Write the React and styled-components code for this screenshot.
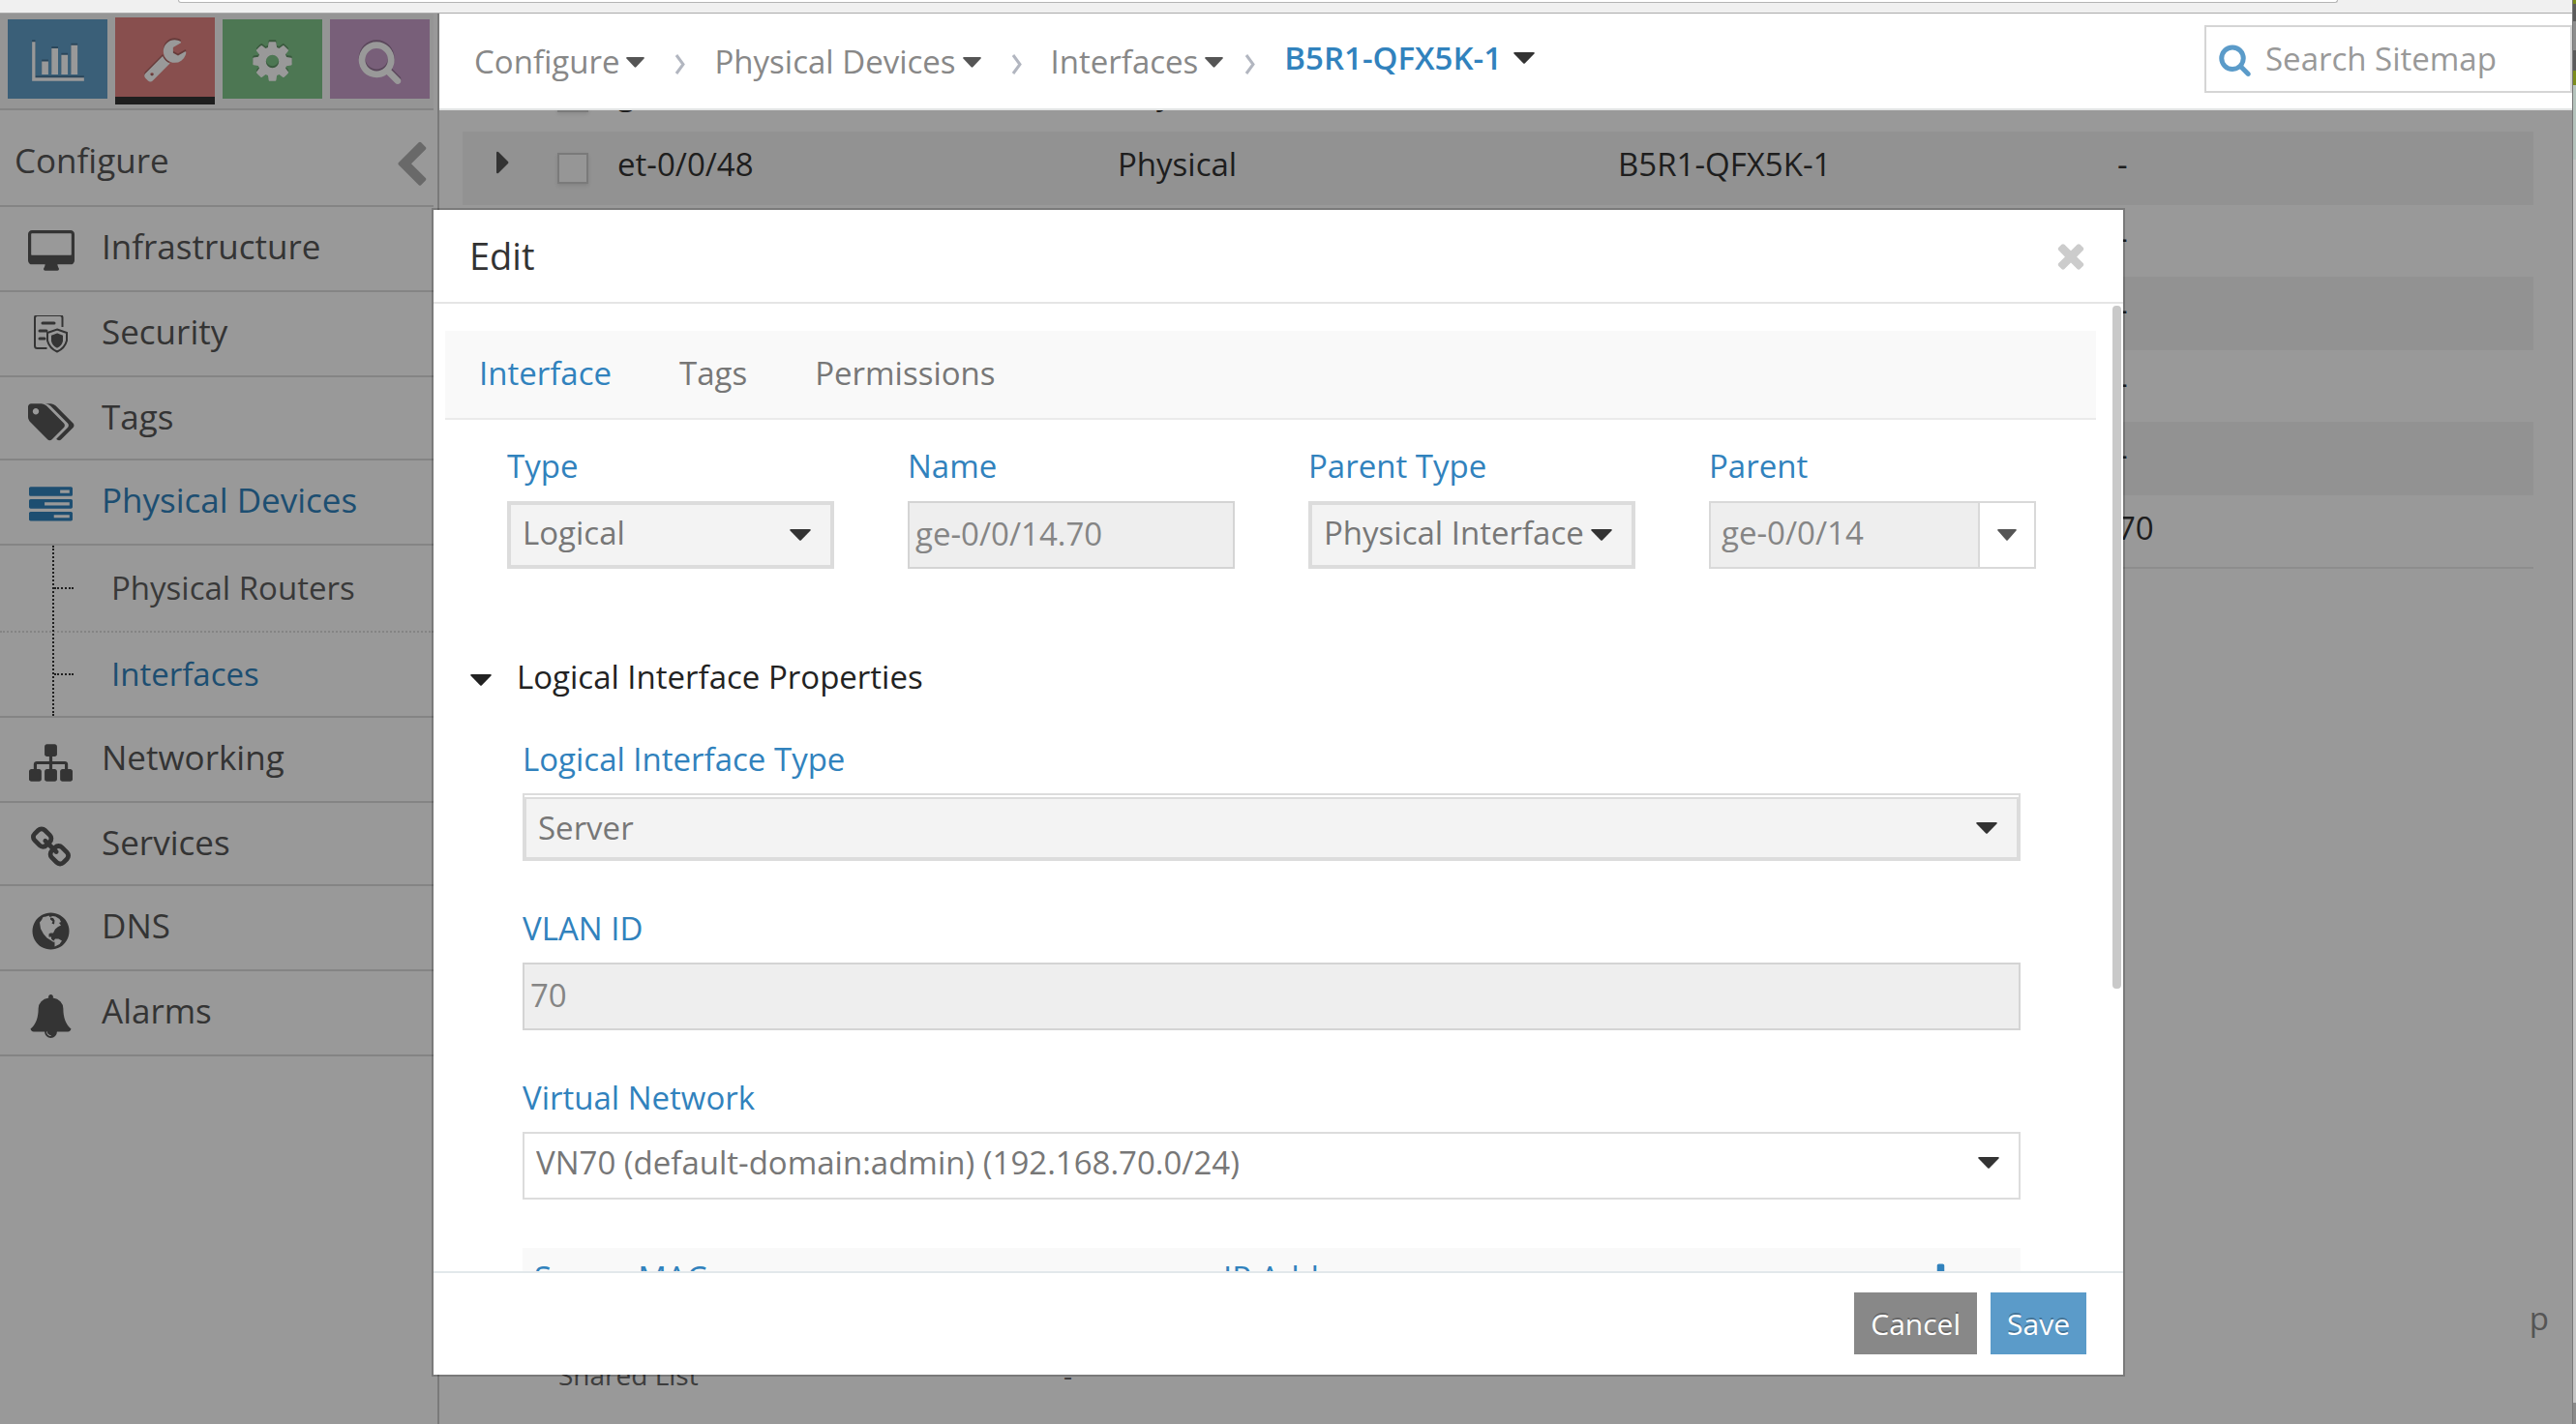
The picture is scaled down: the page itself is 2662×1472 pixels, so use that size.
import React from "react";
import styled, { createGlobalStyle, css } from "styled-components";

const Global = createGlobalStyle`
  *, *::before, *::after { box-sizing: border-box; }
  body { margin: 0; overflow: hidden; }
  body, button, input, select, table {
    font-family: "Open Sans", "Noto Sans", "Liberation Sans", sans-serif;
    font-size: 33px;
    line-height: 44px;
  }
  button, input, select { margin: 0; border-radius: 0; }
  a { color: inherit; text-decoration: none; }
  ul, ol, dl, dd { margin: 0; padding: 0; list-style: none; }
  h1, h2 { margin: 0; font-weight: 400; }
  svg { display: block; flex: none; }
`;

const blue = "#3182bd";

/* ---------- icons ---------- */

const paths = {
  chart: "M640 896v512h-256v-512h256zm384-512v1024h-256v-1024h256zm1024 1152v128h-2048v-1536h128v1408h1920zm-640-896v768h-256v-768h256zm384-384v1152h-256v-1152h256z",
  wrench: "M448 1472q0-26-19-45t-45-19-45 19-19 45 19 45 45 19 45-19 19-45zm644-420l-682 682q-37 37-90 37-52 0-91-37l-106-108q-38-36-38-90 0-53 38-91l681-681q39 98 114.5 173.5t173.5 114.5zm634-435q0 39-23 106-47 134-164.5 217.5t-258.5 83.5q-185 0-316.5-131.5t-131.5-316.5 131.5-316.5 316.5-131.5q58 0 121.5 16.5t107.5 46.5q16 11 16 28t-16 28l-293 169v224l193 107q5-3 79-48.5t135.5-81 70.5-35.5q15 0 23.5 10t8.5 25z",
  cog: "M1152 896q0-106-75-181t-181-75-181 75-75 181 75 181 181 75 181-75 75-181zm512-109v222q0 12-8 23t-20 13l-185 28q-19 54-39 91 35 50 107 138 10 12 10 25t-9 23q-27 37-99 108t-94 71q-12 0-26-9l-138-108q-44 23-91 38-16 136-29 186-7 28-36 28h-222q-14 0-24.5-8.5t-11.5-21.5l-28-184q-49-16-90-37l-141 107q-10 9-25 9-14 0-25-11-126-114-165-168-7-10-7-23 0-12 8-23 15-21 51-66.5t54-70.5q-27-50-41-99l-183-27q-13-2-21-12.5t-8-23.5v-222q0-12 8-23t19-13l186-28q14-46 39-92-40-57-107-138-10-12-10-24 0-10 9-23 26-36 98.5-107.5t94.5-71.5q13 0 26 10l138 107q44-23 91-38 16-136 29-186 7-28 36-28h222q14 0 24.5 8.5t11.5 21.5l28 184q49 16 90 37l142-107q9-9 24-9 13 0 25 10 129 119 165 170 7 8 7 22 0 12-8 23-15 21-51 66.5t-54 70.5q26 50 41 98l183 28q13 2 21 12.5t8 23.5z",
  search: "M1216 832q0-185-131.5-316.5t-316.5-131.5-316.5 131.5-131.5 316.5 131.5 316.5 316.5 131.5 316.5-131.5 131.5-316.5zm512 832q0 52-38 90t-90 38q-54 0-90-38l-343-342q-179 124-399 124-143 0-273.5-55.5t-225-150-150-225-55.5-273.5 55.5-273.5 150-225 225-150 273.5-55.5 273.5 55.5 225 150 150 225 55.5 273.5q0 220-124 399l343 343q37 37 37 90z",
  desktop: "M1792 992v-832q0-13-9.5-22.5t-22.5-9.5h-1600q-13 0-22.5 9.5t-9.5 22.5v832q0 13 9.5 22.5t22.5 9.5h1600q13 0 22.5-9.5t9.5-22.5zm128-832v1088q0 66-47 113t-113 47h-544q0 37 16 77.5t32 71 16 43.5q0 26-19 45t-45 19h-512q-26 0-45-19t-19-45q0-14 16-44t32-70 16-78h-544q-66 0-113-47t-47-113v-1088q0-66 47-113t113-47h1600q66 0 113 47t47 113z",
  tags: "M448 448q0-53-37.5-90.5t-90.5-37.5-90.5 37.5-37.5 90.5 37.5 90.5 90.5 37.5 90.5-37.5 37.5-90.5zm1067 576q0 53-37 90l-491 492q-39 37-91 37-53 0-90-37l-715-716q-38-37-64.5-101t-26.5-117v-416q0-52 38-90t90-38h416q53 0 117 26.5t102 64.5l715 714q37 39 37 91zm384 0q0 53-37 90l-491 492q-39 37-91 37-36 0-59-14t-53-45l470-470q37-37 37-90 0-52-37-91l-715-714q-38-38-102-64.5t-117-26.5h224q53 0 117 26.5t102 64.5l715 714q37 39 37 91z",
  tasks: "M1024 1408h640v-128h-640v128zm-384-512h1024v-128h-1024v128zm640-512h384v-128h-384v128zm512 832v256q0 26-19 45t-45 19h-1664q-26 0-45-19t-19-45v-256q0-26 19-45t45-19h1664q26 0 45 19t19 45zm0-512v256q0 26-19 45t-45 19h-1664q-26 0-45-19t-19-45v-256q0-26 19-45t45-19h1664q26 0 45 19t19 45zm0-512v256q0 26-19 45t-45 19h-1664q-26 0-45-19t-19-45v-256q0-26 19-45t45-19h1664q26 0 45 19t19 45z",
  sitemap: "M1792 1248v320q0 40-28 68t-68 28h-320q-40 0-68-28t-28-68v-320q0-40 28-68t68-28h96v-192h-512v192h96q40 0 68 28t28 68v320q0 40-28 68t-68 28h-320q-40 0-68-28t-28-68v-320q0-40 28-68t68-28h96v-192h-512v192h96q40 0 68 28t28 68v320q0 40-28 68t-68 28h-320q-40 0-68-28t-28-68v-320q0-40 28-68t68-28h96v-192q0-52 38-90t90-38h512v-192h-96q-40 0-68-28t-28-68v-320q0-40 28-68t68-28h320q40 0 68 28t28 68v320q0 40-28 68t-68 28h-96v192h512q52 0 90 38t38 90v192h96q40 0 68 28t28 68z",
  link: "M1520 1216q0-40-28-68l-208-208q-28-28-68-28-42 0-72 32 3 3 19 18.5t21.5 21.5 15 19 13 25.5 3.5 27.5q0 40-28 68t-68 28q-15 0-27.5-3.5t-25.5-13-19-15-21.5-21.5-18.5-19q-33 31-33 73 0 40 28 68l206 207q27 27 68 27 40 0 68-26l147-146q28-28 28-67zm-703-705q0-40-28-68l-206-207q-28-28-68-28-39 0-68 27l-147 146q-28 28-28 67 0 40 28 68l208 208q27 27 68 27 42 0 72-31-3-3-19-18.5t-21.5-21.5-15-19-13-25.5-3.5-27.5q0-40 28-68t68-28q15 0 27.5 3.5t25.5 13 19 15 21.5 21.5 18.5 19q33-31 33-73zm895 705q0 120-85 203l-147 146q-83 83-203 83-121 0-204-85l-206-207q-83-83-83-203 0-123 88-209l-88-88q-86 88-208 88-120 0-204-84l-208-208q-84-84-84-204t85-203l147-146q83-83 203-83 121 0 204 85l206 207q83 83 83 203 0 123-88 209l88 88q86-88 208-88 120 0 204 84l208 208q84 84 84 204z",
  bell: "M912 1696q0-16-16-16-59 0-101.5-42.5t-42.5-101.5q0-16-16-16t-16 16q0 73 51.5 124.5t124.5 51.5q16 0 16-16zm816-288q0 52-38 90t-90 38h-448q0 106-75 181t-181 75-181-75-75-181h-448q-52 0-90-38t-38-90q50-42 91-88t85-119.5 74.5-158.5 50-206 19.5-260q0-152 117-282.5t307-158.5q-8-19-8-39 0-40 28-68t68-28 68 28 28 68q0 20-8 39 190 28 307 158.5t117 282.5q0 139 19.5 260t50 206 74.5 158.5 85 119.5 91 88z",
  back: "M1427 301l-531 531 531 531q19 19 19 45t-19 45l-166 166q-19 19-45 19t-45-19l-742-742q-19-19-19-45t19-45l742-742q19-19 45-19t45 19l166 166q19 19 19 45t-19 45z",
  times: "M1490 1322q0 40-28 68l-136 136q-28 28-68 28t-68-28l-294-294-294 294q-28 28-68 28t-68-28l-136-136q-28-28-28-68t28-68l294-294-294-294q-28-28-28-68t28-68l136-136q28-28 68-28t68 28l294 294 294-294q28-28 68-28t68 28l136 136q28 28 28 68t-28 68l-294 294 294 294q28 28 28 68z",
  plus: "M1600 736v192q0 40-28 68t-68 28h-416v416q0 40-28 68t-68 28h-192q-40 0-68-28t-28-68v-416h-416q-40 0-68-28t-28-68v-192q0-40 28-68t68-28h416v-416q0-40 28-68t68-28h192q40 0 68 28t28 68v416h416q40 0 68 28t28 68z",
};

const Icon = ({ name, size = 45, units = 1792 }) => (
  <svg height={size} width={Math.round((size * units) / 1792)} viewBox={`0 0 ${units} 1792`} fill="currentColor" aria-hidden="true">
    <path fillRule="evenodd" d={paths[name]} />
  </svg>
);

const GlobeIcon = () => (
  <svg width="45" height="45" viewBox="0 0 45 45" fill="currentColor" aria-hidden="true">
    <path
      fillRule="evenodd"
      d="M22.500 3.500a19 19 0 1 0 0.010 0zM17.500 7.500l3-1 1 1.500 3-1 3 .5 4 2.500 1.500 3 -2 1 2 2.500-3 1.500-3 2.500-2 4-3 0-1.500 1 0 3 2.500 0 0 2 1.500 1.500 2 1 -1 1-3-2-4-2.500-3.500-4-3-5.500-1-6.500 2-2.500 1.500-3z M22 8.500l0 2 2.500 2-1 2 2.500 1 .5-4-1.500-2.500zM27 30.500l3.500 0 3.500 2-2.500 3.500-5 2.500 0-4-1-2z"
    />
  </svg>
);

const PolicyIcon = () => (
  <svg width="45" height="45" viewBox="0 0 45 45" fill="none" stroke="currentColor" strokeWidth="2" aria-hidden="true">
    <path d="M34.500 12.500V3q0-2.500-2.500-2.500H8.500Q6 .5 6 3v29q0 2.500 2.500 2.500h10" transform="translate(0 -0.500)" />
    <path d="M14 8h12M11 16h7M11 24h5" strokeWidth="3" strokeLinecap="round" />
    <path d="M29 14.500l10 3.500v8q-2 8-10 11.500-8-3.500-10-11.500v-8z" />
    <path d="M29 19.500l5 2v5q-1 4-5 6-4-2-5-6v-5z" fill="currentColor" />
  </svg>
);

const Caret = ({ w = 22, h = 12, color = "#333" }) => (
  <svg width={w} height={h} viewBox="0 0 22 12" preserveAspectRatio="none" fill={color} aria-hidden="true">
    <path d="M1.500 0h19q2 0 1 1.500L12 11.300q-1 1-2 0L.5 1.500Q-.5 0 1.500 0z" />
  </svg>
);

const CrumbArrow = () => (
  <svg width="12" height="21" viewBox="0 0 12 21" fill="none" stroke="#b2b6c0" strokeWidth="3" aria-hidden="true">
    <path d="M2 1l7 9.500L2 20" />
  </svg>
);

/* ---------- shell ---------- */

const Shell = styled.div`
  display: flex;
  height: 100vh;
  background: #f0f0f0;
  overflow: hidden;
`;
const Frame = styled.div`
  flex: 1;
  min-width: 0;
  display: flex;
  flex-direction: column;
`;
const Chrome = styled.div`
  flex: none;
  height: 14px;
  padding: 0 242px 0 184px;
  border-bottom: 1px solid #aaa;
`;
const AddressBar = styled.div`
  height: 3px;
  background: #fff;
  border: 1px solid #b4b4b4;
  border-top: 0;
  border-radius: 0 0 4px 4px;
`;
const Viewport = styled.div`
  position: relative;
  flex: 1;
  min-height: 0;
  display: flex;
  background: #fff;
`;
const Edge = styled.div`
  flex: none;
  width: 4px;
  display: flex;
  flex-direction: column;
  border-left: 1px solid #777;
`;
const EdgeBand = styled.div`
  background: ${(p) => p.$color};
  ${(p) => (p.$height ? css`height: ${p.$height}px;` : css`flex: 1;`)}
`;

/* ---------- sidebar ---------- */

const Sidebar = styled.aside`
  flex: none;
  width: 454px;
  padding-right: 4px;
  border-right: 2px solid #ccc;
  background: #fff;
  font-size: 35px;
  color: #575757;
`;
const Tiles = styled.nav`
  display: flex;
  align-items: flex-start;
  gap: 8px;
  height: 100px;
  padding: 4px 4px 0 8px;
  background: #f8f8f8;
  border-bottom: 2px solid #ddd;
`;
const Tile = styled.button`
  flex: 1;
  display: flex;
  align-items: center;
  justify-content: center;
  height: 82px;
  margin-top: 2px;
  padding: 4px 0 0;
  border: 0;
  background: ${(p) => p.$color};
  color: #fff;
  svg { filter: drop-shadow(0 -2px 0 rgba(0, 0, 0, 0.25)); }
  ${(p) =>
    p.$active &&
    css`
      height: 90px;
      margin-top: 0;
      border-bottom: 8px solid #353535;
    `}
`;
const SideTitle = styled.div`
  display: flex;
  align-items: center;
  justify-content: space-between;
  height: 100px;
  padding: 6px 0 0 15px;
  border-bottom: 2px solid #ddd;
`;
const Collapse = styled.button`
  margin-right: -2px;
  padding: 10px 0 0;
  border: 0;
  background: none;
  color: #b0b0b0;
`;
const NavLink = styled.a`
  display: flex;
  align-items: flex-start;
  height: ${(p) => (p.$short ? 86 : 88)}px;
  border-bottom: 2px solid #ddd;
  line-height: 82px;
  color: ${(p) => (p.$active ? blue : "inherit")};
`;
const NavIcon = styled.span`
  display: flex;
  justify-content: center;
  width: 105px;
  padding-top: 24px;
`;
const SubMenu = styled.ul`
  position: relative;
  border-bottom: 2px solid #ddd;
  &::before {
    content: "";
    position: absolute;
    top: 0;
    bottom: 0;
    left: 54px;
    border-left: 2px dotted #353535;
  }
`;
const SubItem = styled.li`
  display: flex;
  align-items: center;
  height: ${(p) => (p.$last ? 86 : 90)}px;
  font-size: 33px;
  color: ${(p) => (p.$active ? blue : "#5f5f5f")};
  border-bottom: ${(p) => (p.$last ? "0" : "2px dotted #ddd")};
  &::before {
    content: "";
    width: 20px;
    margin: 0 39px 0 56px;
    border-top: 2px dotted #353535;
  }
`;

/* ---------- main page ---------- */

const Main = styled.div`
  flex: 1;
  min-width: 0;
  display: flex;
  flex-direction: column;
`;
const TopBar = styled.header`
  position: relative;
  z-index: 3;
  flex: none;
  display: flex;
  align-items: center;
  justify-content: space-between;
  height: 100px;
  padding: 0 0 4px 36px;
  background: #fff;
  border-bottom: 2px solid #e2e4e4;
`;
const Crumbs = styled.ol`
  display: flex;
  align-items: center;
  color: #888;
`;
const Crumb = styled.li`
  display: flex;
  align-items: center;
  gap: 7px;
  padding-top: 6px;
`;
const CrumbGap = styled.li`
  padding: 10px 29px 0 ${(p) => (p.$last ? 22 : 31)}px;
`;
const CurrentCrumb = styled(Crumb)`
  gap: 12px;
  padding-top: 0;
  padding-bottom: 2px;
  color: ${blue};
  font-weight: 600;
`;
const SearchBox = styled.label`
  display: flex;
  align-items: center;
  gap: 14px;
  width: 380px;
  height: 70px;
  padding: 0 12px;
  border: 2px solid #d5d5d5;
  color: #5b9bc9;
  input {
    flex: 1;
    min-width: 0;
    padding: 0;
    border: 0;
    outline: 0;
    color: #999;
  }
  input::placeholder { color: #999; opacity: 1; }
`;
const Content = styled.main`
  flex: 1;
  min-height: 0;
  display: flex;
  flex-direction: column;
  padding: 0 24px 31px;
  overflow: hidden;
`;
const Grid = styled.table`
  width: calc(100% - 16px);
  margin-top: -52px;
  table-layout: fixed;
  border-collapse: separate;
  border-spacing: 0;
  border-bottom: 2px solid #ebebeb;
  color: #333;
  tr { height: 74px; }
  tr:nth-child(even) { height: 76px; background: #f3f3f3; }
  td { padding: 0; line-height: 68px; vertical-align: top; }
`;
const Col = styled.col`
  width: ${(p) => p.$w}px;
`;
const Expand = styled.button`
  display: block;
  width: 14px;
  margin: 20px 0 0 34px;
  padding: 0;
  border: 0;
  background: none;
`;
const RowCheck = styled.input`
  display: block;
  appearance: none;
  width: 32px;
  height: 32px;
  margin: 22px 0 0;
  border: 2px solid #ccc;
  background: #fafafa;
  box-shadow: 0 2px 4px rgba(0, 0, 0, 0.1);
`;
const PagerText = styled.div`
  margin-top: auto;
  text-align: right;
  color: #8e8e8e;
`;
const Details = styled.dl`
  display: flex;
  margin-top: 16px;
  padding-left: 99px;
  font-size: 28px;
  line-height: 40px;
  color: #666;
  dt { width: 522px; }
`;

/* ---------- dialog ---------- */

const Overlay = styled.div`
  position: absolute;
  inset: 0;
  z-index: 2;
  display: flex;
  padding: 201px 462px 49px 446px;
  background: rgba(0, 0, 0, 0.4);
`;
const Dialog = styled.form`
  flex: 1;
  min-width: 0;
  display: flex;
  flex-direction: column;
  background: #fff;
  background-clip: padding-box;
  border: 2px solid rgba(0, 0, 0, 0.2);
`;
const DialogHead = styled.div`
  flex: none;
  display: flex;
  align-items: center;
  justify-content: space-between;
  height: 97px;
  padding: 0 34px 2px 37px;
  border-bottom: 2px solid #e5e5e5;
  color: #333;
  h1 { font-size: 38px; }
  button { padding: 0; border: 0; background: none; color: #ccc; }
`;
const DialogBody = styled.div`
  position: relative;
  flex: 1;
  min-height: 0;
  padding: 28px 28px 0 12px;
  overflow: hidden;
`;
const ScrollThumb = styled.div`
  position: absolute;
  top: 2px;
  right: 2px;
  bottom: 292px;
  width: 9px;
  border-radius: 4px;
  background: #c9c9c9;
`;
const Tabs = styled.div`
  display: flex;
  gap: 70px;
  height: 92px;
  padding-left: 35px;
  background: #f9f9f9;
  border-bottom: 2px solid #ebebeb;
`;
const Tab = styled.button`
  padding: 0 0 2px;
  border: 0;
  background: none;
  color: ${(p) => (p.$active ? blue : "#777")};
`;
const FieldRow = styled.div`
  display: grid;
  grid-template-columns: repeat(4, 1fr);
  gap: 76px;
  padding: 26px 62px 0 64px;
`;
const SectionTitle = styled.h2`
  display: flex;
  align-items: center;
  gap: 26px;
  margin-top: 90px;
  padding-left: 26px;
  font-size: 33px;
  color: #222;
  svg { margin-top: 6px; }
`;
const FieldStack = styled.div`
  display: flex;
  flex-direction: column;
  gap: 48px;
  margin-top: 41px;
  padding: 0 78px 0 80px;
`;
const Field = styled.div`
  display: flex;
  flex-direction: column;
  gap: ${(p) => (p.$compact ? 14 : 13)}px;
  min-width: 0;
  label { color: ${blue}; }
`;
const SelectBox = styled.div`
  display: grid;
  height: 70px;
  padding-top: ${(p) => (p.$inset ? 2 : 0)}px;
  border: 2px solid #dcdcdc;
  & > * { grid-area: 1 / 1; }
  & > svg {
    align-self: center;
    justify-self: end;
    margin: 0 22px 0 0;
    pointer-events: none;
  }
  select {
    appearance: none;
    min-width: 0;
    width: 100%;
    height: 100%;
    padding: 0 46px ${(p) => (p.$inset ? 0 : 4)}px 12px;
    border: 2px solid #dcdcdc;
    background: #f3f3f3;
    color: #777;
    opacity: 1;
  }
  ${(p) =>
    p.$plain &&
    css`
      select { padding: 0 46px 6px 10px; border-color: transparent; background: #fff; }
      & > svg { margin: 0 20px 6px 0; }
    `}
`;
const TextInput = styled.input`
  width: 100%;
  height: 70px;
  padding: 0 6px 4px;
  border: 2px solid #d4d4d4;
  background: #eee;
  color: #858585;
`;
const Combo = styled.div`
  display: flex;
  height: 70px;
  border: 2px solid #d9d9d9;
  input {
    flex: 1;
    min-width: 0;
    padding: 0 11px 4px;
    border: 0;
    background: #eee;
    color: #858585;
  }
  button {
    display: flex;
    align-items: center;
    justify-content: center;
    width: 58px;
    padding: 0;
    border: 0;
    border-left: 2px solid #d9d9d9;
    background: #fff;
  }
`;
const MacTable = styled.table`
  width: 100%;
  margin-top: 2px;
  table-layout: fixed;
  border-collapse: collapse;
  background: #f9f9f9;
  th {
    padding: 9px 12px;
    font-weight: 400;
    text-align: left;
    color: ${blue};
  }
  th:first-child { width: 46%; }
  th:last-child { width: 166px; }
  button {
    display: block;
    margin: 0 auto;
    padding: 0;
    border: 0;
    background: none;
    color: ${blue};
  }
`;
const DialogFoot = styled.div`
  flex: none;
  display: flex;
  justify-content: flex-end;
  gap: 14px;
  padding: 20px 38px 21px;
  border-top: 2px solid #e2e8eb;
`;
const Action = styled.button`
  height: 64px;
  padding: 2px 17px 0;
  border: 0;
  background: ${(p) => (p.$primary ? "#5b9bc9" : "#888")};
  color: #fff;
  font-size: 30px;
  text-shadow: 0 -2px 0 rgba(0, 0, 0, 0.25);
`;

const navTop = [
  ["Infrastructure", <Icon name="desktop" units={1920} />],
  ["Security", <PolicyIcon />],
  ["Tags", <Icon name="tags" units={1920} />, "short"],
  ["Physical Devices", <Icon name="tasks" />, "active"],
];
const navBottom = [
  ["Networking", <Icon name="sitemap" />],
  ["Services", <Icon name="link" />, "short"],
  ["DNS", <GlobeIcon />],
  ["Alarms", <Icon name="bell" />],
];

const NavItem = ([label, icon, flag]) => (
  <NavLink key={label} href="#" $short={flag === "short"} $active={flag === "active"}>
    <NavIcon>{icon}</NavIcon>
    {label}
  </NavLink>
);

const rows = [
  ["ge-0/0/14", "Physical", "B5R1-QFX5K-1", "-"],
  ["et-0/0/48", "Physical", "B5R1-QFX5K-1", "-"],
  ["", "", "", "-"],
  ["", "", "", "-"],
  ["", "", "", "-"],
  ["", "", "", "-"],
  ["", "", "", "70"],
];

const crumbs = ["Configure", "Physical Devices", "Interfaces"];

export default function App() {
  return (
    <Shell>
      <Global />
      <Frame>
        <Chrome>
          <AddressBar />
        </Chrome>
        <Viewport>
          <Sidebar>
            <Tiles>
              <Tile $color="#619ec9" aria-label="Monitor"><Icon name="chart" size={47} units={2048} /></Tile>
              <Tile $color="#e38482" aria-label="Configure" $active><Icon name="wrench" size={47} /></Tile>
              <Tile $color="#80c68a" aria-label="Settings"><Icon name="cog" size={47} /></Tile>
              <Tile $color="#c89eca" aria-label="Query"><Icon name="search" size={47} /></Tile>
            </Tiles>
            <SideTitle>
              Configure
              <Collapse aria-label="Collapse menu"><Icon name="back" size={50} /></Collapse>
            </SideTitle>
            <nav>
              {navTop.map(NavItem)}
              <SubMenu>
                <SubItem><a href="#">Physical Routers</a></SubItem>
                <SubItem $active $last><a href="#">Interfaces</a></SubItem>
              </SubMenu>
              {navBottom.map(NavItem)}
            </nav>
          </Sidebar>

          <Main>
            <TopBar>
              <Crumbs>
                {crumbs.map((c, i) => (
                  <React.Fragment key={c}>
                    <Crumb><a href="#">{c}</a><Caret w={19} h={11} color="#555" /></Crumb>
                    <CrumbGap $last={i === crumbs.length - 1}><CrumbArrow /></CrumbGap>
                  </React.Fragment>
                ))}
                <CurrentCrumb><a href="#">B5R1-QFX5K-1</a><Caret /></CurrentCrumb>
              </Crumbs>
              <SearchBox>
                <Icon name="search" size={35} />
                <input type="text" placeholder="Search Sitemap" aria-label="Search Sitemap" />
              </SearchBox>
            </TopBar>
            <Content>
              <Grid>
                <colgroup>
                  <Col $w={98} /><Col $w={62} /><Col $w={517} /><Col $w={517} /><Col $w={516} /><col />
                </colgroup>
                <tbody>
                  {rows.map((r, i) => (
                    <tr key={i}>
                      <td>
                        {r[0] && (
                          <Expand aria-label="Expand row">
                            <svg width="14" height="24" viewBox="0 0 14 24" fill="#555"><path d="M1 2q0-2 2-1l10 10q1 1 0 2L3 23q-2 1-2-1z" /></svg>
                          </Expand>
                        )}
                      </td>
                      <td>{r[0] && <RowCheck type="checkbox" aria-label={r[0]} />}</td>
                      {r.map((c, j) => <td key={j}>{c}</td>)}
                    </tr>
                  ))}
                </tbody>
              </Grid>
              <PagerText>p</PagerText>
              <Details><dt>Shared List</dt><dd>-</dd></Details>
            </Content>
          </Main>

          <Overlay>
            <Dialog role="dialog" aria-labelledby="dialog-title" onSubmit={(e) => e.preventDefault()}>
              <DialogHead>
                <h1 id="dialog-title">Edit</h1>
                <button type="button" aria-label="Close"><Icon name="times" size={40} /></button>
              </DialogHead>
              <DialogBody>
                <ScrollThumb />
                <Tabs>
                  <Tab type="button" $active>Interface</Tab>
                  <Tab type="button">Tags</Tab>
                  <Tab type="button">Permissions</Tab>
                </Tabs>
                <FieldRow>
                  <Field $compact>
                    <label htmlFor="type">Type</label>
                    <SelectBox>
                      <select id="type" disabled><option>Logical</option></select>
                      <Caret />
                    </SelectBox>
                  </Field>
                  <Field $compact>
                    <label htmlFor="name">Name</label>
                    <TextInput id="name" disabled defaultValue="ge-0/0/14.70" />
                  </Field>
                  <Field $compact>
                    <label htmlFor="parent-type">Parent Type</label>
                    <SelectBox>
                      <select id="parent-type" disabled><option>Physical Interface</option></select>
                      <Caret />
                    </SelectBox>
                  </Field>
                  <Field $compact>
                    <label htmlFor="parent">Parent</label>
                    <Combo>
                      <input id="parent" disabled defaultValue="ge-0/0/14" />
                      <button type="button" aria-label="Show parents"><Caret w={20} color="#555" /></button>
                    </Combo>
                  </Field>
                </FieldRow>
                <SectionTitle><Caret color="#222" />Logical Interface Properties</SectionTitle>
                <FieldStack>
                  <Field>
                    <label htmlFor="lif-type">Logical Interface Type</label>
                    <SelectBox $inset>
                      <select id="lif-type" disabled><option>Server</option></select>
                      <Caret />
                    </SelectBox>
                  </Field>
                  <Field>
                    <label htmlFor="vlan">VLAN ID</label>
                    <TextInput id="vlan" disabled defaultValue="70" />
                  </Field>
                  <Field>
                    <label htmlFor="vn">Virtual Network</label>
                    <SelectBox $plain>
                      <select id="vn"><option>VN70 (default-domain:admin) (192.168.70.0/24)</option></select>
                      <Caret />
                    </SelectBox>
                  </Field>
                  <MacTable>
                    <thead>
                      <tr>
                        <th>Server MAC</th>
                        <th>IP Address</th>
                        <th><button type="button" aria-label="Add server"><Icon name="plus" size={35} /></button></th>
                      </tr>
                    </thead>
                  </MacTable>
                </FieldStack>
              </DialogBody>
              <DialogFoot>
                <Action type="button">Cancel</Action>
                <Action type="submit" $primary>Save</Action>
              </DialogFoot>
            </Dialog>
          </Overlay>
        </Viewport>
      </Frame>
      <Edge>
        <EdgeBand $color="#7b8c1c" $height={4} />
        <EdgeBand $color="#5b5b5b" $height={18} />
        <EdgeBand $color="#8d8d8d" $height={30} />
        <EdgeBand $color="#5b5b5b" $height={21} />
        <EdgeBand $color="#7b8c1c" $height={15} />
        <EdgeBand $color="#b5c3bd" $height={77} />
        <EdgeBand $color="#c6c6c6" />
        <EdgeBand $color="#8a8a8a" $height={22} />
      </Edge>
    </Shell>
  );
}
